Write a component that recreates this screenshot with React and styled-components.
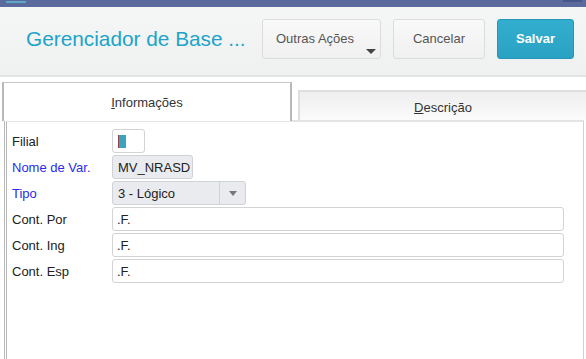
import React from "react";
import styled, { createGlobalStyle } from "styled-components";

const Global = createGlobalStyle`
  html, body { margin: 0; padding: 0; background: #fff; }
  body { font-family: "Liberation Sans", Arial, sans-serif; overflow: hidden; }
  * { box-sizing: border-box; }
`;

const Page = styled.div`
  width: 586px;
  height: 359px;
  display: flex;
  flex-direction: column;
  overflow: hidden;
  background: #fff;
`;

const TopBar = styled.div`
  height: 7px;
  background: #5a6a9c;
  position: relative;
  flex: none;
`;

const TopMark = styled.span`
  position: absolute;
  top: ${p => p.$top}px;
  left: ${p => p.$left}px;
  width: ${p => p.$w}px;
  height: 2px;
  background: ${p => p.$c};
`;

const Header = styled.header`
  flex: none;
  height: 70px;
  background: linear-gradient(#f5f6f6, #eff1f1);
  border-bottom: 2px solid #e2e4e4;
  display: flex;
  align-items: center;
  padding: 0 12px 4px 26px;
`;

const Title = styled.h1`
  margin: 0;
  flex: 1;
  font-size: 20.8px;
  font-weight: normal;
  color: #21a3c9;
  white-space: nowrap;
`;

const Actions = styled.div`
  display: flex;
  gap: 12px;
`;

const Button = styled.button`
  position: relative;
  height: 40px;
  width: ${p => p.$w}px;
  border-radius: 3px;
  font-family: inherit;
  font-size: 13px;
  border: 1px solid ${p => (p.$primary ? "#2496b8" : "#dcdcdc")};
  background: ${p =>
    p.$primary
      ? "linear-gradient(#33aece, #2aa2c4)"
      : "linear-gradient(#f9f9f9, #f0f0f0)"};
  color: ${p => (p.$primary ? "#fff" : "#555")};
  font-weight: ${p => (p.$primary ? "bold" : "normal")};
  text-align: ${p => (p.$left ? "left" : "center")};
  padding: ${p => (p.$left ? "0 0 2px 13px" : "0 0 2px")};
`;

const Caret = styled.span`
  position: absolute;
  right: 4px;
  bottom: 4px;
  width: 0;
  height: 0;
  border-left: 5px solid transparent;
  border-right: 5px solid transparent;
  border-top: 5px solid #444;
`;

const TabRow = styled.div`
  flex: none;
  display: flex;
  align-items: flex-end;
  gap: 6px;
  padding: 5px 0 0 2px;
  position: relative;
  z-index: 1;
  margin-bottom: -1px;
`;

const Tab = styled.div`
  display: flex;
  align-items: center;
  justify-content: center;
  font-size: 13px;
  color: #333;
  ${p =>
    p.$active
      ? `
    width: 290px;
    height: 39px;
    background: #fff;
    border-top: 1px solid #c8c8c8;
    border-left: 2px solid #b9b9b9;
    border-right: 2px solid #b9b9b9;
  `
      : `
    flex: 1;
    height: 30px;
    margin-bottom: 1px;
    background: linear-gradient(#eeeeee, #fbfbfb);
    border-top: 2px solid #dedede;
    border-left: 2px solid #dedede;
    padding-top: 2px;
  `}
`;

const U = styled.span`
  text-decoration: underline;
`;

const Panel = styled.section`
  flex: 1;
  margin: 0 2px 0 4px;
  border-top: 2px solid #e4e4e4;
  border-left: 3px double #b9b9b9;
  border-right: 1px solid #d0d0d0;
  padding: 7px 19px 0 5px;
`;

const Form = styled.div`
  display: grid;
  grid-template-columns: 100px 1fr;
  row-gap: 2px;
  align-items: center;
`;

const Label = styled.label`
  font-size: 13px;
  color: ${p => (p.$req ? "#2b2bea" : "#222")};
  padding-top: 1px;
`;

const Field = styled.div`
  position: relative;
  height: 24px;
  width: ${p => (p.$w ? `${p.$w}px` : "100%")};
  border: 1px solid ${p => (p.$gray ? "#cfd2d6" : "#d3d3d3")};
  border-radius: 3px;
  background: ${p => (p.$gray ? "#e9ebee" : "#fff")};
  font-size: 13px;
  color: #222;
  display: flex;
  align-items: center;
  padding-left: ${p => (p.$gray ? 5 : 4)}px;
  padding-right: ${p => (p.$select ? 0 : 2)}px;
  overflow: hidden;
  white-space: nowrap;
`;

const Cursor = styled.span`
  width: 8px;
  height: 13px;
  margin-left: 1px;
  background: #3aa3bd;
  border-left: 1px solid #a04040;
`;

const SelectText = styled.span`
  flex: 1;
`;

const SelectBtn = styled.span`
  width: 26px;
  height: 100%;
  border-left: 1px solid #cfd2d6;
  display: flex;
  align-items: center;
  justify-content: center;
`;

const SmallTri = styled.span`
  width: 0;
  height: 0;
  border-left: 4px solid transparent;
  border-right: 4px solid transparent;
  border-top: 5px solid #777;
`;

export default function App() {
  return (
    <>
      <Global />
      <Page>
        <TopBar>
          <TopMark $top={1} $left={6} $w={20} $c="#5fa6c4" />
          <TopMark $top={0} $left={563} $w={19} $c="#47558a" />
        </TopBar>
        <Header>
          <Title>Gerenciador de Base ...</Title>
          <Actions>
            <Button $w={119} $left>
              Outras Ações
              <Caret />
            </Button>
            <Button $w={92}>Cancelar</Button>
            <Button $w={77} $primary>
              Salvar
            </Button>
          </Actions>
        </Header>
        <TabRow>
          <Tab $active>
            <span>
              <U>I</U>nformações
            </span>
          </Tab>
          <Tab>
            <span>
              <U>D</U>escrição
            </span>
          </Tab>
        </TabRow>
        <Panel>
          <Form>
            <Label>Filial</Label>
            <Field $w={33}>
              <Cursor />
            </Field>
            <Label $req>Nome de Var.</Label>
            <Field $w={81} $gray>
              MV_NRASD
            </Field>
            <Label $req>Tipo</Label>
            <Field $w={134} $gray $select>
              <SelectText>3 - Lógico</SelectText>
              <SelectBtn>
                <SmallTri />
              </SelectBtn>
            </Field>
            <Label>Cont. Por</Label>
            <Field>.F.</Field>
            <Label>Cont. Ing</Label>
            <Field>.F.</Field>
            <Label>Cont. Esp</Label>
            <Field>.F.</Field>
          </Form>
        </Panel>
      </Page>
    </>
  );
}
